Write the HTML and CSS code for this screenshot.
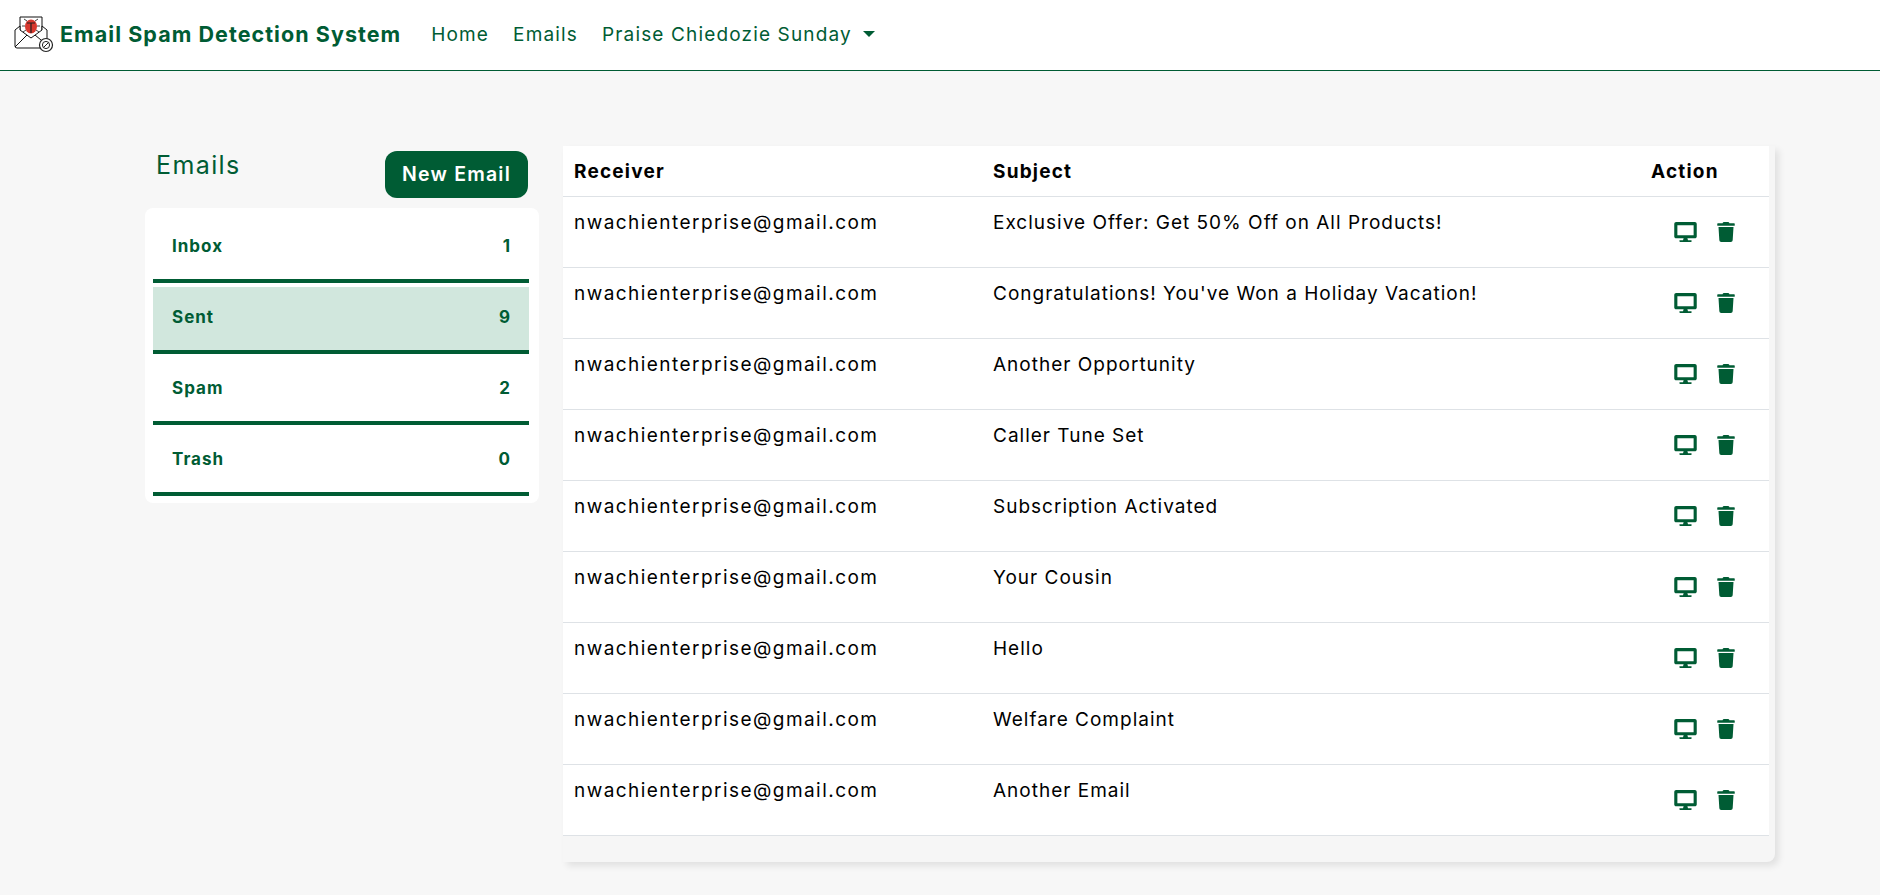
FILE: index.html
```html
<!DOCTYPE html>
<html lang="en">
<head>
  <meta charset="UTF-8">
  <title>Email Spam Detection System</title>
  <link rel="stylesheet" href="styles.css">
</head>
<body>
  <svg class="sprites" width="0" height="0">
    <symbol id="icon-desktop" viewBox="0 0 576 512">
      <path d="M528 0H48C21.5 0 0 21.5 0 48v320c0 26.5 21.5 48 48 48h192l-16 48h-72c-13.3 0-24 10.7-24 24s10.7 24 24 24h272c13.3 0 24-10.7 24-24s-10.7-24-24-24h-72l-16-48h192c26.5 0 48-21.5 48-48V48c0-26.5-21.5-48-48-48zm-32 336H80V80h416v256z"/>
    </symbol>
    <symbol id="icon-trash" viewBox="0 0 448 512">
      <path d="M432 32H312l-9.4-18.7A24 24 0 0 0 281.1 0H166.8a23.72 23.72 0 0 0-21.4 13.3L136 32H16A16 16 0 0 0 0 48v32a16 16 0 0 0 16 16h416a16 16 0 0 0 16-16V48a16 16 0 0 0-16-16zM53.2 467a48 48 0 0 0 47.9 45h245.8a48 48 0 0 0 47.9-45L416 128H32z"/>
    </symbol>
  </svg>

  <nav class="navbar">
    <a class="brand" href="#">
      <svg class="logo" viewBox="0 0 40 38" width="40" height="38">
        <path d="M6 15V2h22v13" fill="#fff" stroke="#111" stroke-width="1"/>
        <path d="M1 15l5-4v4l11 8 11-8v-4l5 4v16a2 2 0 0 1-2 2H3a2 2 0 0 1-2-2z" fill="#fff" stroke="#111" stroke-width="1" stroke-linejoin="round"/>
        <path d="M1 32l12-12M33 30L21 20" fill="none" stroke="#111" stroke-width="1"/>
        <path d="M13 6l-3-2M21 6l3-2M11 11H8M23 11h3M12 15l-3 2M22 15l3 2" stroke="#111" stroke-width=".8"/>
        <ellipse cx="17" cy="11.5" rx="6" ry="7" fill="#d8392f"/>
        <path d="M13 8h8M17 8v10" stroke="#222" stroke-width="1.2"/>
        <circle cx="32" cy="30" r="6.5" fill="#fff" stroke="#222" stroke-width="1.2"/>
        <circle cx="32" cy="30" r="3.6" fill="none" stroke="#222" stroke-width="1"/>
        <path d="M29.5 32.5l5-5" stroke="#222" stroke-width="1"/>
      </svg>
      <span>Email Spam Detection System</span>
    </a>
    <ul class="nav-links">
      <li><a href="#">Home</a></li>
      <li><a href="#">Emails</a></li>
      <li><a href="#" class="dropdown-toggle">Praise Chiedozie Sunday</a></li>
    </ul>
  </nav>

  <main class="content">
    <aside class="sidebar">
      <div class="sidebar-head">
        <h4>Emails</h4>
        <a class="btn-new" href="#">New Email</a>
      </div>
      <div class="folders">
        <a class="folder" href="#"><span>Inbox</span><span>1</span></a>
        <a class="folder active" href="#"><span>Sent</span><span>9</span></a>
        <a class="folder" href="#"><span>Spam</span><span>2</span></a>
        <a class="folder" href="#"><span>Trash</span><span>0</span></a>
      </div>
    </aside>

    <section class="mail-card">
      <table class="mail-table">
        <thead>
          <tr>
            <th class="col-receiver">Receiver</th>
            <th>Subject</th>
            <th class="col-action">Action</th>
          </tr>
        </thead>
        <tbody>
          <tr>
            <td>nwachienterprise@gmail.com</td>
            <td>Exclusive Offer: Get 50% Off on All Products!</td>
            <td class="actions"><svg class="ico-desktop"><use href="#icon-desktop"/></svg><svg class="ico-trash"><use href="#icon-trash"/></svg></td>
          </tr>
          <tr>
            <td>nwachienterprise@gmail.com</td>
            <td>Congratulations! You've Won a Holiday Vacation!</td>
            <td class="actions"><svg class="ico-desktop"><use href="#icon-desktop"/></svg><svg class="ico-trash"><use href="#icon-trash"/></svg></td>
          </tr>
          <tr>
            <td>nwachienterprise@gmail.com</td>
            <td>Another Opportunity</td>
            <td class="actions"><svg class="ico-desktop"><use href="#icon-desktop"/></svg><svg class="ico-trash"><use href="#icon-trash"/></svg></td>
          </tr>
          <tr>
            <td>nwachienterprise@gmail.com</td>
            <td>Caller Tune Set</td>
            <td class="actions"><svg class="ico-desktop"><use href="#icon-desktop"/></svg><svg class="ico-trash"><use href="#icon-trash"/></svg></td>
          </tr>
          <tr>
            <td>nwachienterprise@gmail.com</td>
            <td>Subscription Activated</td>
            <td class="actions"><svg class="ico-desktop"><use href="#icon-desktop"/></svg><svg class="ico-trash"><use href="#icon-trash"/></svg></td>
          </tr>
          <tr>
            <td>nwachienterprise@gmail.com</td>
            <td>Your Cousin</td>
            <td class="actions"><svg class="ico-desktop"><use href="#icon-desktop"/></svg><svg class="ico-trash"><use href="#icon-trash"/></svg></td>
          </tr>
          <tr>
            <td>nwachienterprise@gmail.com</td>
            <td>Hello</td>
            <td class="actions"><svg class="ico-desktop"><use href="#icon-desktop"/></svg><svg class="ico-trash"><use href="#icon-trash"/></svg></td>
          </tr>
          <tr>
            <td>nwachienterprise@gmail.com</td>
            <td>Welfare Complaint</td>
            <td class="actions"><svg class="ico-desktop"><use href="#icon-desktop"/></svg><svg class="ico-trash"><use href="#icon-trash"/></svg></td>
          </tr>
          <tr>
            <td>nwachienterprise@gmail.com</td>
            <td>Another Email</td>
            <td class="actions"><svg class="ico-desktop"><use href="#icon-desktop"/></svg><svg class="ico-trash"><use href="#icon-trash"/></svg></td>
          </tr>
        </tbody>
      </table>
    </section>
  </main>
</body>
</html>
```

FILE: styles.css
```css
html, body {
  margin: 0;
  padding: 0;
}

body {
  min-height: 895px;
  background-color: #f7f7f7;
  color: #000;
  font-family: "Inter", "Liberation Sans", sans-serif;
  font-size: 19px;
}

a {
  color: inherit;
  text-decoration: none;
}

.sprites {
  position: absolute;
}

/* top bar */
.navbar {
  display: flex;
  align-items: center;
  height: 70px;
  padding: 0 14px 2px;
  box-sizing: content-box;
  height: 68px;
  background: #fff;
  border-bottom: 1px solid #005c34;
  color: #005c34;
}

.brand {
  display: flex;
  align-items: center;
  gap: 6px;
  font-size: 21.5px;
  font-weight: 700;
  letter-spacing: 1.05px;
}

.logo {
  flex: none;
}

.nav-links {
  display: flex;
  gap: 24px;
  margin: 0 0 0 30px;
  padding: 0;
  list-style: none;
  letter-spacing: 1.15px;
}

.dropdown-toggle::after {
  content: "";
  display: inline-block;
  margin-left: 11px;
  vertical-align: 4px;
  border-top: 6px solid #005c34;
  border-left: 6px solid transparent;
  border-right: 6px solid transparent;
}

/* page */
.content {
  display: flex;
  align-items: flex-start;
  padding: 76px 0 0 145px;
}

.sidebar {
  flex: none;
  width: 394px;
  margin-right: 24px;
}

.sidebar-head {
  display: flex;
  justify-content: space-between;
  align-items: flex-start;
  height: 61px;
  padding: 4px 11px 0 11px;
  box-sizing: border-box;
}

.sidebar-head h4 {
  margin: -2px 0 0 0;
  color: #005c34;
  font-size: 25px;
  font-weight: 400;
  line-height: 32px;
  letter-spacing: 1.4px;
}

.btn-new {
  width: 143px;
  height: 47px;
  line-height: 47px;
  text-align: center;
  border-radius: 12px;
  background: #005c34;
  color: #fff;
  font-size: 19.5px;
  font-weight: 600;
  letter-spacing: 1.2px;
}

.folders {
  display: flex;
  flex-direction: column;
  gap: 4px;
  padding: 8px 10px 7px 8px;
  background: #fff;
  border-radius: 8px;
}

.folder {
  display: flex;
  justify-content: space-between;
  align-items: center;
  height: 60px;
  padding: 0 18px 3px 19px;
  border-bottom: 4px solid #005c34;
  color: #005c34;
  font-size: 17px;
  font-weight: 700;
  letter-spacing: 1px;
}

.folder.active {
  background: #d1e7dd;
}

/* mail table */
.mail-card {
  width: 1212px;
  height: 716px;
  margin-top: -1px;
  padding-right: 6px;
  box-sizing: border-box;
  background: #f6f6f6;
  border-radius: 0 0 8px 0;
  box-shadow: 4px 4px 7px rgba(0, 0, 0, 0.09);
}

.mail-table {
  width: 100%;
  background: #fff;
  border-collapse: collapse;
  table-layout: fixed;
}

.mail-table th,
.mail-table td {
  padding: 0 11px;
  border-bottom: 1px solid #dee2e6;
  text-align: left;
  vertical-align: top;
}

.mail-table thead tr {
  height: 50px;
}

.mail-table tbody tr {
  height: 71px;
}

.mail-table th {
  padding-top: 12px;
  font-weight: 700;
  letter-spacing: 1.2px;
  line-height: 27px;
}

.mail-table td {
  padding-top: 12px;
  line-height: 27px;
  letter-spacing: 1px;
}

.mail-table td:first-child {
  letter-spacing: 1.45px;
}

.col-receiver {
  width: 397px;
}

.col-action {
  width: 107px;
}

.mail-table .actions {
  padding: 25px 0 0 11px;
  line-height: 0;
}

.ico-desktop,
.ico-trash {
  fill: #005c34;
}

.ico-desktop {
  width: 23px;
  height: 20px;
  margin-left: 23px;
}

.ico-trash {
  width: 18px;
  height: 20px;
  margin-left: 20px;
}
```
